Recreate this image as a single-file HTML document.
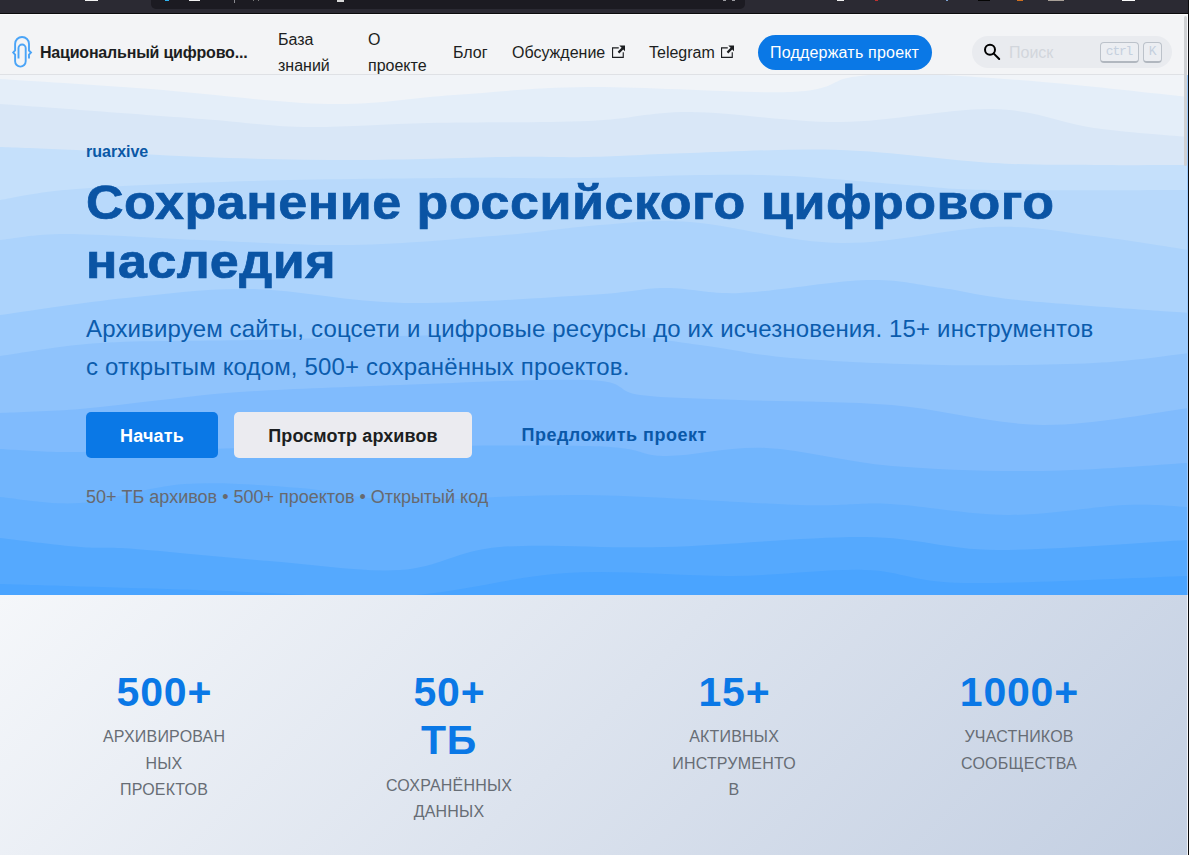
<!DOCTYPE html>
<html lang="ru">
<head>
<meta charset="utf-8">
<title>ruarxive</title>
<style>
*{box-sizing:border-box;margin:0;padding:0}
html,body{width:1189px;height:855px;overflow:hidden;background:#f3f4f6;font-family:"Liberation Sans",sans-serif;color:#1c1e21}
.a{position:absolute;white-space:nowrap}
#topbar{position:absolute;left:0;top:0;width:1189px;height:13px;background:#2b2a33}
#url{position:absolute;left:151px;top:0;width:594px;height:9px;background:#1c1b22;border-radius:0 0 5px 5px}
#bl{position:absolute;left:0;top:13px;width:1189px;height:1px;background:#0b0b0d}
#wl{position:absolute;left:0;top:14px;width:1189px;height:1px;background:#fbfbfc}
#nav{position:absolute;left:0;top:15px;width:1187px;height:59px;background:#f3f4f6}
#navsh{position:absolute;left:0;top:74px;width:1187px;height:1px;background:#dfe1e5;box-shadow:0 1px 1px rgba(0,0,0,0.04)}
#hero{position:absolute;left:0;top:75px;width:1188px;height:520px;overflow:hidden;background:#9ccafd}
#stats{position:absolute;left:0;top:595px;width:1187px;height:260px;background:linear-gradient(135deg,#f5f7fa 0%,#c3cfe2 100%)}
#sbtrack{position:absolute;left:1183px;top:14px;width:4px;height:841px;background:transparent}
#sbthumb{position:absolute;left:1184px;top:16px;width:3px;height:150px;background:#cfd1d4;border-radius:2px}
#edgew{position:absolute;left:1187px;top:13px;width:1px;height:842px;background:#f5f6f8}
#edgeb{position:absolute;left:1188px;top:0;width:1px;height:855px;background:#0b0b0d}
.nl{font-size:16px;line-height:20px;color:#1c1e21}
.btn-sup{position:absolute;left:758px;top:35px;width:174px;height:35px;border-radius:18px;background:#0a78e6}
.search{position:absolute;left:972px;top:36px;width:200px;height:32px;border-radius:16px;background:#e9ebef}
.kbd{position:absolute;top:42px;height:21px;border:1px solid #bcc2ca;border-bottom:2px solid #b1b7bf;border-radius:4px;background:#eceef2;font-family:"Liberation Mono",monospace;font-size:13px;line-height:17px;color:#c5d0de;text-align:center;letter-spacing:-1.2px;text-indent:-1px}
.b1{position:absolute;left:86px;top:412px;width:132px;height:46px;border-radius:5px;background:#0a78e6}
.b2{position:absolute;left:234px;top:412px;width:238px;height:46px;border-radius:5px;background:#ebebf0}
.num{position:absolute;width:285px;text-align:center;font-weight:bold;font-size:41px;line-height:48px;color:#0a78e6;letter-spacing:0.8px;text-indent:0.8px}
.lab{position:absolute;width:285px;text-align:center;font-size:16px;line-height:26.6px;color:#676d75;letter-spacing:0.2px;text-indent:0.2px}
</style>
</head>
<body>
<div id="topbar"></div>
<div id="url"></div>
<div class="a" style="left:85px;top:0px;width:13px;height:1px;background:#f2f2f2"></div>
<div class="a" style="left:165px;top:0px;width:4px;height:1px;background:#2fb4f0"></div>
<div class="a" style="left:189px;top:0px;width:11px;height:1px;background:#f0f0f0"></div>
<div class="a" style="left:234px;top:0px;width:1px;height:3px;background:#8a8a90"></div>
<div class="a" style="left:253px;top:0px;width:1px;height:1px;background:#777"></div>
<div class="a" style="left:258px;top:0px;width:1px;height:1px;background:#777"></div>
<div class="a" style="left:337px;top:0px;width:7px;height:2px;background:#d8d8d8"></div>
<div class="a" style="left:723px;top:0px;width:3px;height:1px;background:#9a9aa0"></div>
<div class="a" style="left:732px;top:0px;width:3px;height:1px;background:#9a9aa0"></div>
<div class="a" style="left:837px;top:0px;width:7px;height:1px;background:#eeeeee"></div>
<div class="a" style="left:875px;top:0px;width:3px;height:1px;background:#c03030"></div>
<div class="a" style="left:946px;top:0px;width:2px;height:1px;background:#7aa0d0"></div>
<div class="a" style="left:978px;top:0px;width:12px;height:1px;background:#050505"></div>
<div class="a" style="left:1017px;top:0px;width:6px;height:1px;background:#d07020"></div>
<div class="a" style="left:1048px;top:0px;width:16px;height:1px;background:#a8a098"></div>
<div class="a" style="left:1122px;top:0px;width:13px;height:1px;background:#fafafa"></div>
<div id="bl"></div>
<div id="wl"></div>

<div id="nav"></div>
<div id="navsh"></div>

<!-- logo -->
<svg class="a" style="left:0;top:0" width="60" height="80" viewBox="0 0 60 80">
<path d="M29 58.4 V54.7 L31 52.6 L29 50.5 V43.9 A6.95 6.95 0 0 0 15.1 43.9 V50.5 L13.2 52.6 L15.1 54.7 V61.3 A5.3 5.3 0 0 0 25.7 61.3 V48.1 A3.6 3.6 0 0 0 18.5 48.1 V58.4" fill="none" stroke="#4aa4f7" stroke-width="1.9"/>
</svg>
<div class="a" style="left:40px;top:43px;font-size:16px;line-height:20px;font-weight:bold;color:#1c1e21;letter-spacing:-0.2px">Национальный цифрово...</div>

<div class="a nl" style="left:278px;top:26.7px;line-height:26px">База<br>знаний</div>
<div class="a nl" style="left:368px;top:26.7px;line-height:26px">О<br>проекте</div>
<div class="a nl" style="left:453px;top:43px">Блог</div>
<div class="a nl" style="left:512px;top:43px">Обсуждение</div>
<svg class="a" style="left:611.5px;top:44.5px" width="13.5" height="13.5" viewBox="0 0 24 24"><path fill="#1c1e21" d="M21 13v10h-21v-19h12v2h-10v15h17v-8h2zm3-12h-10.988l4.035 4-6.977 7.07 2.828 2.828 6.977-7.07 4.125 4.172v-11z"/></svg>
<div class="a nl" style="left:649px;top:43px">Telegram</div>
<svg class="a" style="left:720.5px;top:44.5px" width="13.5" height="13.5" viewBox="0 0 24 24"><path fill="#1c1e21" d="M21 13v10h-21v-19h12v2h-10v15h17v-8h2zm3-12h-10.988l4.035 4-6.977 7.07 2.828 2.828 6.977-7.07 4.125 4.172v-11z"/></svg>

<div class="btn-sup"></div>
<div class="a nl" style="left:770px;top:42.8px;color:#fff;letter-spacing:0.2px">Поддержать проект</div>

<div class="search"></div>
<svg class="a" style="left:978px;top:38px" width="30" height="28" viewBox="0 0 30 28">
<circle cx="12" cy="11.8" r="5" fill="none" stroke="#000" stroke-width="2"/>
<path d="M15.6 15.4 L21.2 21" stroke="#000" stroke-width="2" stroke-linecap="round"/>
</svg>
<div class="a nl" style="left:1009px;top:43px;color:#d2d6dc">Поиск</div>
<div class="kbd" style="left:1100px;width:39px">ctrl</div>
<div class="kbd" style="left:1143px;width:19px">K</div>

<!-- HERO -->
<div id="hero">
<svg width="1187" height="520" viewBox="0 75 1187 520" preserveAspectRatio="none" id="waves">
<rect x="0" y="75" width="1188" height="520" fill="#f1f4f8"/>
<path d="M0,79 C25.2,80.7 96.3,84.8 151,89 C205.7,93.2 277.5,103.0 328,104 C378.5,105.0 410.5,97.8 454,95 C497.5,92.2 532.8,87.5 589,87 C645.2,86.5 747.2,93.7 791,92 C834.8,90.3 831.0,80.0 852,77 C873.0,74.0 885.2,73.2 917,74 C948.8,74.8 997.7,78.2 1043,82 C1088.3,85.8 1164.7,94.5 1189,97 L1189,600 L0,600 Z" fill="#e4eef9"/>
<path d="M0,104 C33.7,106.5 151.5,115.2 202,119 C252.5,122.8 265.2,126.3 303,127 C340.8,127.7 381.3,124.0 429,123 C476.7,122.0 545.5,122.8 589,121 C632.5,119.2 648.0,111.8 690,112 C732.0,112.2 790.5,122.5 841,122 C891.5,121.5 950.8,108.0 993,109 C1035.2,110.0 1061.3,123.3 1094,128 C1126.7,132.7 1173.2,135.5 1189,137 L1189,600 L0,600 Z" fill="#d9e7f7"/>
<path d="M0,147 C12.7,147.5 42.3,148.3 76,150 C109.7,151.7 155.8,155.3 202,157 C248.2,158.7 302.5,160.0 353,160 C403.5,160.0 465.7,157.5 505,157 C544.3,156.5 558.2,157.7 589,157 C619.8,156.3 648.0,154.2 690,153 C732.0,151.8 790.5,148.3 841,150 C891.5,151.7 950.8,160.5 993,163 C1035.2,165.5 1061.3,164.7 1094,165 C1126.7,165.3 1173.2,165.0 1189,165 L1189,600 L0,600 Z" fill="#c5e0fb"/>
<path d="M0,200 C12.7,198.2 34.0,192.2 76,189 C118.0,185.8 189.7,182.8 252,181 C314.3,179.2 393.8,178.5 450,178 C506.2,177.5 547.3,178.5 589,178 C630.7,177.5 666.7,175.3 700,175 C733.3,174.7 754.5,174.3 789,176 C823.5,177.7 873.3,182.7 907,185 C940.7,187.3 944.0,189.2 991,190 C1038.0,190.8 1156.0,190.0 1189,190 L1189,600 L0,600 Z" fill="#b8d9fb"/>
<path d="M0,240 C11.0,239.0 32.7,234.0 66,234 C99.3,234.0 152.2,238.2 200,240 C247.8,241.8 302.2,245.8 353,245 C403.8,244.2 463.8,238.3 505,235 C546.2,231.7 569.2,227.2 600,225 C630.8,222.8 649.8,219.0 690,222 C730.2,225.0 790.5,242.2 841,243 C891.5,243.8 950.8,228.2 993,227 C1035.2,225.8 1061.3,232.2 1094,236 C1126.7,239.8 1173.2,247.7 1189,250 L1189,600 L0,600 Z" fill="#acd3fc"/>
<path d="M0,315 C21.0,312.2 84.0,302.3 126,298 C168.0,293.7 205.7,288.2 252,289 C298.3,289.8 347.8,302.0 404,303 C460.2,304.0 545.5,297.5 589,295 C632.5,292.5 639.8,288.3 665,288 C690.2,287.7 706.3,294.3 740,293 C773.7,291.7 833.3,280.8 867,280 C900.7,279.2 916.8,284.7 942,288 C967.2,291.3 976.8,295.8 1018,300 C1059.2,304.2 1160.5,310.8 1189,313 L1189,600 L0,600 Z" fill="#9ccbfd"/>
<path d="M0,356 C16.7,353.8 58.3,345.7 100,343 C141.7,340.3 200.0,341.2 250,340 C300.0,338.8 343.5,337.2 400,336 C456.5,334.8 539.0,331.5 589,333 C639.0,334.5 666.3,340.8 700,345 C733.7,349.2 750.7,354.7 791,358 C831.3,361.3 891.5,364.2 942,365 C992.5,365.8 1052.8,365.0 1094,363 C1135.2,361.0 1173.2,354.7 1189,353 L1189,600 L0,600 Z" fill="#8fc3fc"/>
<path d="M0,413 C13.3,412.3 53.2,411.2 80,409 C106.8,406.8 134.3,402.8 161,400 C187.7,397.2 200.2,394.5 240,392 C279.8,389.5 341.8,387.0 400,385 C458.2,383.0 549.0,378.3 589,380 C629.0,381.7 614.8,391.7 640,395 C665.2,398.3 698.0,398.3 740,400 C782.0,401.7 841.5,400.8 892,405 C942.5,409.2 993.5,424.5 1043,425 C1092.5,425.5 1164.7,410.8 1189,408 L1189,600 L0,600 Z" fill="#80bbfd"/>
<path d="M0,449 C10.0,449.5 40.0,451.7 60,452 C80.0,452.3 80.0,451.8 120,451 C160.0,450.2 221.8,447.8 300,447 C378.2,446.2 528.2,444.5 589,446 C649.8,447.5 635.5,455.7 665,456 C694.5,456.3 728.2,446.3 766,448 C803.8,449.7 845.8,462.2 892,466 C938.2,469.8 993.5,471.5 1043,471 C1092.5,470.5 1164.7,464.3 1189,463 L1189,600 L0,600 Z" fill="#71b5fd"/>
<path d="M0,497 C13.3,498.0 49.2,505.2 80,503 C110.8,500.8 148.3,486.5 185,484 C221.7,481.5 264.2,485.3 300,488 C335.8,490.7 352.5,498.8 400,500 C447.5,501.2 518.3,494.2 585,495 C651.7,495.8 749.2,503.5 800,505 C850.8,506.5 855.3,502.3 890,504 C924.7,505.7 968.8,514.8 1008,515 C1047.2,515.2 1094.8,506.3 1125,505 C1155.2,503.7 1178.3,506.7 1189,507 L1189,600 L0,600 Z" fill="#65b0fe"/>
<path d="M0,538 C13.3,539.5 57.5,545.2 80,547 C102.5,548.8 103.5,546.7 135,549 C166.5,551.3 224.8,557.5 269,561 C313.2,564.5 361.5,572.3 400,570 C438.5,567.7 455.8,550.8 500,547 C544.2,543.2 604.2,548.7 665,547 C725.8,545.3 809.7,536.5 865,537 C920.3,537.5 943.0,549.5 997,550 C1051.0,550.5 1157.0,541.7 1189,540 L1189,600 L0,600 Z" fill="#55a9fe"/>
<path d="M0,584 C33.3,585.0 133.3,588.0 200,590 C266.7,592.0 339.0,598.8 400,596 C461.0,593.2 510.7,576.3 566,573 C621.3,569.7 682.2,576.5 732,576 C781.8,575.5 826.3,568.8 865,570 C903.7,571.2 910.0,582.0 964,583 C1018.0,584.0 1151.5,577.2 1189,576 L1189,600 L0,600 Z" fill="#4aa4ff"/>
</svg>
</div>

<div class="a" style="left:86px;top:141.5px;font-size:16px;line-height:20px;font-weight:bold;color:#0a58a6">ruarxive</div>
<div class="a" style="left:86px;top:173.3px;font-size:49px;line-height:59px;font-weight:bold;color:#0a54a4;letter-spacing:0.5px;transform:scaleX(1.0615);transform-origin:0 0;-webkit-text-stroke:0.7px #0a54a4">Сохранение российского цифрового<br>наследия</div>
<div class="a" style="left:86px;top:309.5px;font-size:24px;line-height:38.6px;color:#0b5cad;letter-spacing:0.15px">Архивируем сайты, соцсети и цифровые ресурсы до их исчезновения. 15+ инструментов<br>с открытым кодом, 500+ сохранённых проектов.</div>

<div class="b1"></div>
<div class="a" style="left:86px;top:417.5px;width:132px;text-align:center;font-size:18px;line-height:36px;font-weight:bold;color:#fff;letter-spacing:0.2px">Начать</div>
<div class="b2"></div>
<div class="a" style="left:234px;top:417.5px;width:238px;text-align:center;font-size:18px;line-height:36px;font-weight:bold;color:#1c1e21;letter-spacing:0.1px">Просмотр архивов</div>
<div class="a" style="left:521.5px;top:416.8px;font-size:18px;line-height:36px;font-weight:bold;color:#0a58a8;letter-spacing:0.5px">Предложить проект</div>

<div class="a" style="left:86px;top:487.3px;font-size:18px;line-height:20px;color:#67696f">50+ ТБ архивов • 500+ проектов • Открытый код</div>

<!-- STATS -->
<div id="stats"></div>
<div class="num" style="left:21.5px;top:668px">500+</div>
<div class="lab" style="left:21.5px;top:724px">АРХИВИРОВАН<br>НЫХ<br>ПРОЕКТОВ</div>
<div class="num" style="left:306.5px;top:668px">50+<br>ТБ</div>
<div class="lab" style="left:306.5px;top:772.5px">СОХРАНЁННЫХ<br>ДАННЫХ</div>
<div class="num" style="left:591.5px;top:668px">15+</div>
<div class="lab" style="left:591.5px;top:724px">АКТИВНЫХ<br>ИНСТРУМЕНТО<br>В</div>
<div class="num" style="left:876.5px;top:668px">1000+</div>
<div class="lab" style="left:876.5px;top:724px">УЧАСТНИКОВ<br>СООБЩЕСТВА</div>

<div id="sbthumb"></div>
<div class="a" style="left:1187px;top:14px;width:1px;height:61px;background:#f7f8fa"></div>
<div class="a" style="left:1187px;top:595px;width:1px;height:260px;background:#f2f4f8"></div>
<div class="a" style="left:1188px;top:428px;width:1px;height:14px;background:#8a4a3a"></div>
<div class="a" style="left:1188px;top:452px;width:1px;height:1px;background:#ddd"></div>
<div class="a" style="left:1188px;top:543px;width:1px;height:1px;background:#ddd"></div>
<div class="a" style="left:1188px;top:549px;width:1px;height:1px;background:#ddd"></div>
<div id="edgeb"></div>
</body>
</html>
